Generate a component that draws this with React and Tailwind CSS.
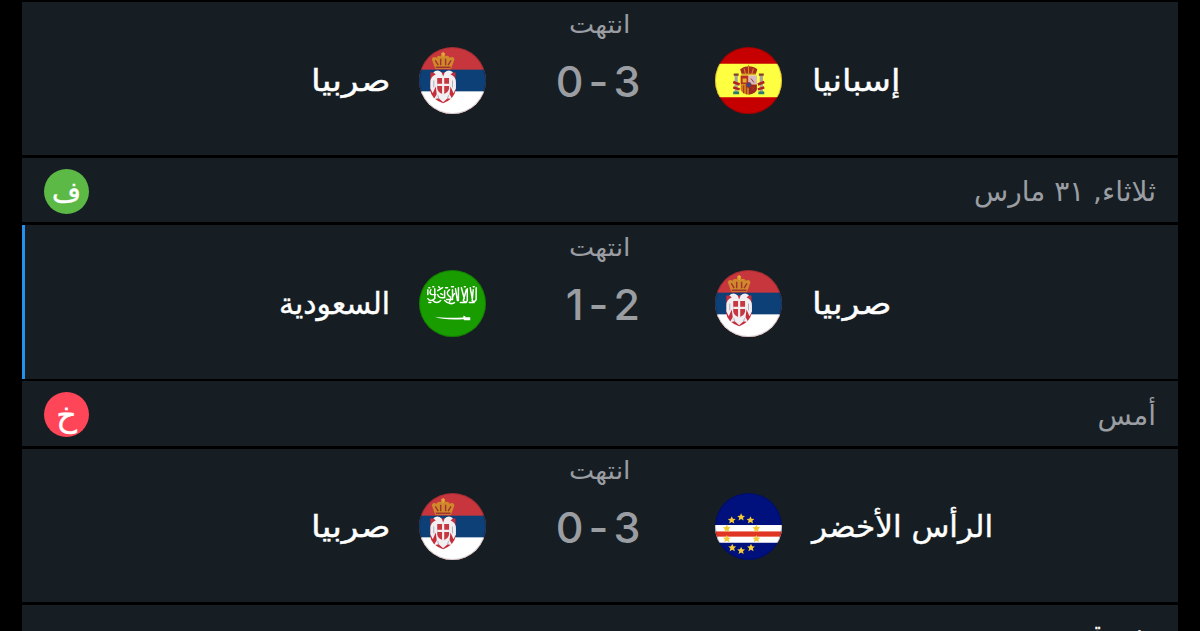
import React from "react";

const arabic = "font-['DejaVu_Sans',sans-serif] whitespace-nowrap";

function Eagle() {
  return (
    <g>
      <path d="M16.500 22 L13 12.500 Q14 9 18 11 Q19 8 22 9.500 Q22 7 24.500 7 Q27 7 27 9.500 Q30 8 31 11 Q35 9 36 12.500 L32.500 22 Z" fill="#d08a2c" />
      <path d="M17 20.500 H32 M16.500 13.500 L19.500 18.500 M22 12 V18.500 M27 12 V18.500 M32.500 13.500 L29.500 18.500" stroke="#a23430" strokeWidth="1.500" fill="none" />
      <path d="M24.500 5 V10 M22.500 7 H26.500" stroke="#e6b33c" strokeWidth="1.200" />
      <path d="M11.500 26 H37 V44 Q36 53 24.500 57 Q12 53 11.500 44 Z" fill="#c52f3b" />
      <path d="M23 26 Q19 22 14.500 25.500 L17 28 Q11.500 30 11.500 36 V42 L14 47 L17 40 L18 48 L15 53 L20 52 L24.500 56 L29 52 L34 53 L31 48 L32 40 L35 47 L37.500 42 V36 Q37.500 30 32 28 L34.500 25.500 Q30 22 26 26 L24.500 30 Z" fill="#f1eff1" />
      <path d="M18.500 31.500 H30.500 V42 Q30 46 24.500 48 Q19 46 18.500 42 Z" fill="#c63742" />
      <path d="M24.500 31 V48 M18.500 38.500 H30.500" stroke="#f5eeee" strokeWidth="2.200" />
      <path d="M15 34 V41 M34 34 V41 M20 52 L19 49 M29 52 L30 49" stroke="#aeb0bd" strokeWidth="1" />
    </g>
  );
}

function Serbia() {
  return (
    <g>
      <rect width="68" height="68" fill="#c7363d" />
      <rect y="23" width="68" height="23" fill="#0c4076" />
      <rect y="45" width="68" height="23" fill="#fff" />
      <Eagle />
    </g>
  );
}

function Spain() {
  return (
    <g>
      <rect width="68" height="68" fill="#c60000" />
      <rect y="17" width="68" height="34" fill="#ffff42" />
      <path d="M21.500 28 V46 M47 28 V46" stroke="#aaa49c" strokeWidth="3.200" />
      <path d="M18.500 46.500 H24.500 M44 46.500 H50" stroke="#277c67" strokeWidth="2.800" />
      <path d="M19 28 H24 M44.500 28 H49.500" stroke="#84402f" strokeWidth="2.400" />
      <path d="M18.500 35.500 L25 38 M18.500 41 L25 43 M50 35.500 L43.500 38 M50 41 L43.500 43" stroke="#b02320" strokeWidth="2.600" />
      <path d="M27 27.500 L25.500 22.500 Q29 19.500 34 19.500 Q39.500 19.500 43 22.500 L41.500 27.500 Z" fill="#a82d1e" />
      <path d="M34 18 V27 M29.500 22 L31 27 M39 22 L37.500 27 M27 27.500 H41.500" stroke="#d08a24" strokeWidth="1.100" />
      <path d="M26 29 H34 V38 H26 Z" fill="#b82e20" />
      <path d="M34 29 H42.500 V38 H34 Z" fill="#d6b9c4" />
      <path d="M26 38 H34 V48.500 Q26.500 47.500 26 43 Z" fill="#d07a1c" />
      <path d="M34 38 H42.500 V43 Q42 47.500 34 48.500 Z" fill="#9f2721" />
      <path d="M28 36 V32 H32 V36 Z" fill="#e2b12c" />
      <path d="M36.500 32 L39.500 36 M29 39 V47 M32 39 V48 M37 40 L40.500 44 M40.500 40 L37 44" stroke="#a63b25" strokeWidth="1" fill="none" />
      <circle cx="34.200" cy="38.500" r="2.500" fill="#344b83" stroke="#923034" strokeWidth="1" />
    </g>
  );
}

function Saudi() {
  return (
    <g>
      <rect width="68" height="68" fill="#189c00" />
      <g fill="none" stroke="#fff" strokeWidth="1.500" strokeLinecap="round">
        <path d="M58 18 V30 Q57 33 54 31 L55 20 M52 18 L54 29 M49 19 V31 Q48 34 45 31 L48 20 M43 18 L46 29 M40 18 V31 M37 19 L39 31 M34 20 V30 H28 M31 20 Q27 23 30 26 Q34 28 31 32 M26 21 V28 Q20 29 19 25 M24 18 L19 21 M16 19 V29 Q12 33 9 29 M12 20 Q10 24 13 25 H17 M9 20 V25 M22 31 Q18 35 14 31 M36 33 Q31 36 26 31 M42 33 H48 M51 33 H56" />
        <path d="M10 18 H11 M14 17 H15 M20 17 L21 18 M27 18 H29 M33 17 H35 M46 17 H47 M55 17 H56 M10 33 H12 M22 24 L24 25 M36 24 L34 27" />
      </g>
      <path d="M16 47.500 Q24 49 45 48.300 L45 46.500 L47 47 V48 H52 V51 H46 L45 50 Q24 51 16 47.500 Z" fill="#fff" />
    </g>
  );
}

const stars = [
  [26.500, 24.500], [36, 27.500], [42, 36], [42, 46.500], [36.500, 55.500],
  [26.500, 58.500], [17.500, 55.500], [12, 46.500], [12, 36], [17, 27.500],
];

function CapeVerde() {
  return (
    <g>
      <rect width="68" height="68" fill="#00107d" />
      <rect y="32.500" width="68" height="18" fill="#fff" />
      <rect y="39" width="68" height="5.300" fill="#e13524" />
      {stars.map(([x, y]) => (
        <path
          key={`${x}-${y}`}
          transform={`translate(${x} ${y})`}
          d="M0 -4 L1.200 -1.400 L4 -1.200 L1.900 .7 L2.600 3.500 L0 2 L-2.600 3.500 L-1.900 .7 L-4 -1.200 L-1.200 -1.400 Z"
          fill="#f4cb35"
        />
      ))}
    </g>
  );
}

const flags = { serbia: Serbia, spain: Spain, saudi: Saudi, cape: CapeVerde };

function Flag({ name }) {
  const Art = flags[name];
  return (
    <svg viewBox="0 0 68 68" className="h-[67px] w-[67px] shrink-0 rounded-full">
      <Art />
      <circle cx="34" cy="34" r="33.500" fill="none" stroke="#000" strokeOpacity=".2" />
    </svg>
  );
}

// Horizontal stretch of each team name.
const stretch = {
  "صربيا": "scale-x-[1.16]",
  "إسبانيا": "scale-x-[1.13]",
  "السعودية": "scale-x-[0.99]",
  "الرأس الأخضر": "scale-x-[1.035]",
};

function TeamName({ name, origin }) {
  return (
    <span dir="rtl" className={`${arabic} ${origin} ${stretch[name]} inline-block text-[30px] text-white [-webkit-text-stroke:0.4px_white]`}>
      {name}
    </span>
  );
}

function Match({ home, homeFlag, away, awayFlag, homeGoals, awayGoals, active }) {
  return (
    <div className={`h-[153.4px] shrink-0 bg-[#161e23] ${active ? "shadow-[inset_3px_0_0_#2492eb]" : ""}`}>
      <div className={`${arabic} flex h-[44.6px] items-center justify-center text-[25px] text-[#9a9da2]`}>
        <span className="inline-block scale-x-[1.07]">انتهت</span>
      </div>
      <div className="flex h-[67px] items-center justify-center">
        <div className="flex flex-1 items-center justify-end gap-[28px]">
          <TeamName name={away} origin="origin-right" />
          <Flag name={awayFlag} />
        </div>
        <div className="flex w-[229px] justify-center pt-[2px] pr-px font-[Inter,sans-serif] text-[43px] font-medium leading-none text-[#9a9da2]">
          <span className="w-[38px] text-right">{awayGoals}</span>
          <span className="w-[30px] text-center">-</span>
          <span className="w-[40px] text-left">{homeGoals}</span>
        </div>
        <div className="flex flex-1 items-center gap-[30px]">
          <Flag name={homeFlag} />
          <TeamName name={home} origin="origin-left" />
        </div>
      </div>
    </div>
  );
}

function DateRow({ label, result, color, resultSize }) {
  return (
    <div dir="rtl" className="flex h-[64.3px] shrink-0 items-center justify-between bg-[#161e23] px-[22px] pt-[2px]">
      <span className={`${arabic} pt-[2px] text-[28px] text-[#9a9da2]`}>{label}</span>
      <span className={`${arabic} ${color} ${resultSize} flex h-[45px] w-[45px] items-center justify-center rounded-full leading-none text-white [-webkit-text-stroke:0.4px_white]`}>
        {result}
      </span>
    </div>
  );
}

export default function App() {
  return (
    <div className="flex h-[631px] w-[1200px] flex-col gap-[2.8px] overflow-hidden bg-black px-[22px] pt-[2px]">
      <Match home="إسبانيا" homeFlag="spain" away="صربيا" awayFlag="serbia" homeGoals={3} awayGoals={0} />
      <DateRow label="ثلاثاء, ٣١ مارس" result="ف" color="bg-[#5cb946]" resultSize="pt-[3px] text-[28px]" />
      <Match home="صربيا" homeFlag="serbia" away="السعودية" awayFlag="saudi" homeGoals={2} awayGoals={1} active />
      <DateRow label="أمس" result="خ" color="bg-[#ff4558]" resultSize="pt-px text-[32px]" />
      <Match home="الرأس الأخضر" homeFlag="cape" away="صربيا" awayFlag="serbia" homeGoals={3} awayGoals={0} />
      <div dir="rtl" className="h-[80px] shrink-0 bg-[#161e23] px-[22px] pt-[7px]">
        <span className={`${arabic} inline-block origin-right scale-x-[0.8] text-[28px] leading-[40px] text-white [-webkit-text-stroke:0.4px_white]`}>مسيرة</span>
      </div>
    </div>
  );
}
